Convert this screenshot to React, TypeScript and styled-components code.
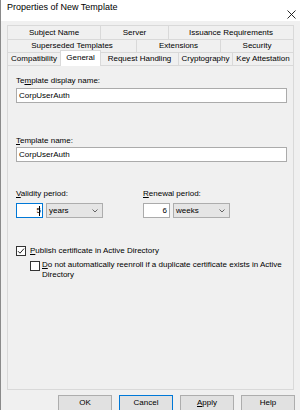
import React from "react";
import styled, { createGlobalStyle } from "styled-components";

const Global = createGlobalStyle`
  html, body { margin: 0; padding: 0; background: #f0f0f0; }
  * { box-sizing: border-box; }
`;

const Window = styled.div`
  width: 300px;
  height: 410px;
  overflow: hidden;
  background: #f0f0f0;
  border-left: 1px solid #8a8a8a;
  font-family: "Liberation Sans", Arial, sans-serif;
  font-size: 8px;
  color: #000;
  display: flex;
  flex-direction: column;
`;

const TitleBar = styled.div`
  height: 21px;
  flex: none;
  background: #ffffff;
  display: flex;
  justify-content: space-between;
  align-items: flex-start;
  padding: 1px 4px 0 6px;
`;

const Title = styled.div`
  font-size: 9px;
  line-height: 12px;
`;

const Close = styled.svg`
  margin-top: 9px;
  width: 9px;
  height: 9px;
`;

const Body = styled.div`
  display: flex;
  flex-direction: column;
  padding: 4px 0 0 6px;
`;

const TabRow = styled.div<{ $h: number }>`
  display: flex;
  height: ${(p) => p.$h}px;
`;

const Tab = styled.div<{ $w: number; $last?: boolean; $active?: boolean }>`
  width: ${(p) => p.$w + (p.$last || p.$active ? 1 : 0)}px;
  flex: none;
  display: flex;
  align-items: center;
  justify-content: center;
  white-space: nowrap;
  line-height: 10px;
  border-top: 1px solid #d9d9d9;
  border-left: 1px solid #d9d9d9;
  border-right: ${(p) => (p.$last || p.$active ? "1px solid #d9d9d9" : "none")};
  background: ${(p) => (p.$active ? "#ffffff" : "#f0f0f0")};
  position: relative;
  z-index: ${(p) => (p.$active ? 2 : 1)};
  margin-top: ${(p) => (p.$active ? -2 : 0)}px;
  height: ${(p) => (p.$active ? "calc(100% + 3px)" : "100%")};
  margin-right: ${(p) => (p.$active ? -1 : 0)}px;
  padding-bottom: ${(p) => (p.$active ? 1 : 0)}px;
`;

const Panel = styled.div`
  width: 287px;
  height: 325px;
  flex: none;
  border: 1px solid #d9d9d9;
  background: #f0f0f0;
  padding: 10px 6px 0 8px;
  display: flex;
  flex-direction: column;
  position: relative;
  z-index: 1;
`;

const Label = styled.div<{ $mt?: number }>`
  line-height: 10px;
  height: 10px;
  white-space: nowrap;
  margin-top: ${(p) => p.$mt ?? 0}px;
`;

const TextBox = styled.div<{ $mt?: number }>`
  height: 15px;
  margin-top: ${(p) => p.$mt ?? 0}px;
  background: #ffffff;
  border: 1px solid #ababab;
  display: flex;
  align-items: center;
  padding-left: 2px;
  line-height: 10px;
`;

const PeriodGrid = styled.div`
  display: grid;
  grid-template-columns: 127px 1fr;
  margin-top: 27px;
`;

const PeriodCol = styled.div`
  display: flex;
  flex-direction: column;
`;

const Controls = styled.div`
  display: flex;
  gap: 3px;
  margin-top: 4px;
`;

const Spin = styled.div<{ $focus?: boolean }>`
  width: 27px;
  height: 15px;
  background: #ffffff;
  border: 1px solid ${(p) => (p.$focus ? "#0078d7" : "#ababab")};
  display: flex;
  align-items: center;
  justify-content: flex-end;
  padding-right: 2px;
  line-height: 10px;
`;

const Caret = styled.span`
  display: inline-block;
  width: 1px;
  height: 10px;
  background: #000;
  margin-left: -2px;
`;

const Combo = styled.div`
  width: 57px;
  height: 15px;
  background: #e5e5e5;
  border: 1px solid #adadad;
  display: flex;
  align-items: center;
  justify-content: space-between;
  padding: 0 4px 0 2px;
  line-height: 10px;
`;

const Checks = styled.div`
  display: flex;
  flex-direction: column;
  margin-top: 28px;
`;

const CheckRow = styled.div<{ $indent?: number; $mt?: number }>`
  display: flex;
  align-items: flex-start;
  gap: ${(p) => (p.$indent ? 2 : 4)}px;
  margin-left: ${(p) => p.$indent ?? 0}px;
  margin-top: ${(p) => p.$mt ?? 0}px;
  line-height: 10px;
`;

const Box = styled.div<{ $mt?: number }>`
  width: 10px;
  height: 10px;
  flex: none;
  margin-top: ${(p) => p.$mt ?? 0}px;
  background: #ffffff;
  border: 1px solid #333333;
  display: flex;
  align-items: center;
  justify-content: center;
`;

const CheckText = styled.div`
  flex: 1;
`;

const Buttons = styled.div`
  display: flex;
  justify-content: flex-end;
  gap: 7px;
  margin-top: 5px;
  padding-right: 5px;
`;

const Button = styled.div<{ $default?: boolean }>`
  width: 54px;
  height: 16px;
  background: #e1e1e1;
  border: 1px solid ${(p) => (p.$default ? "#0078d7" : "#adadad")};
  display: flex;
  align-items: center;
  justify-content: center;
  line-height: 10px;
`;

type TabDef = { label: string; w: number; active?: boolean };

const rows: { h: number; tabs: TabDef[] }[] = [
  {
    h: 14,
    tabs: [
      { label: "Subject Name", w: 93 },
      { label: "Server", w: 68 },
      { label: "Issuance Requirements", w: 125 },
    ],
  },
  {
    h: 13,
    tabs: [
      { label: "Superseded Templates", w: 129 },
      { label: "Extensions", w: 84 },
      { label: "Security", w: 73 },
    ],
  },
  {
    h: 13,
    tabs: [
      { label: "Compatibility", w: 53 },
      { label: "General", w: 40, active: true },
      { label: "Request Handling", w: 78 },
      { label: "Cryptography", w: 54 },
      { label: "Key Attestation", w: 61 },
    ],
  },
];

const Chevron = () => (
  <svg width="6" height="4" viewBox="0 0 6 4">
    <path d="M0.5 0.5 L3 3 L5.5 0.5" fill="none" stroke="#555" strokeWidth="0.9" />
  </svg>
);

export default function App() {
  return (
    <>
      <Global />
      <Window>
        <TitleBar>
          <Title>Properties of New Template</Title>
          <Close viewBox="0 0 9 9">
            <path d="M0.5 0.5 L8.5 8.5 M8.5 0.5 L0.5 8.5" stroke="#111" strokeWidth="0.9" />
          </Close>
        </TitleBar>
        <Body>
          {rows.map((r, i) => (
            <TabRow key={i} $h={r.h}>
              {r.tabs.map((t, j) => (
                <Tab key={t.label} $w={t.w} $active={t.active} $last={j === r.tabs.length - 1}>
                  {t.label}
                </Tab>
              ))}
            </TabRow>
          ))}
          <Panel>
            <Label>
              Te<u>m</u>plate display name:
            </Label>
            <TextBox $mt={2}>CorpUserAuth</TextBox>
            <Label $mt={33}>
              <u>T</u>emplate name:
            </Label>
            <TextBox $mt={1}>CorpUserAuth</TextBox>
            <PeriodGrid>
              <PeriodCol>
                <Label>
                  <u>V</u>alidity period:
                </Label>
                <Controls>
                  <Spin $focus>
                    5<Caret />
                  </Spin>
                  <Combo>
                    years
                    <Chevron />
                  </Combo>
                </Controls>
              </PeriodCol>
              <PeriodCol>
                <Label>
                  <u>R</u>enewal period:
                </Label>
                <Controls>
                  <Spin>6</Spin>
                  <Combo>
                    weeks
                    <Chevron />
                  </Combo>
                </Controls>
              </PeriodCol>
            </PeriodGrid>
            <Checks>
              <CheckRow>
                <Box>
                  <svg width="8" height="8" viewBox="0 0 8 8">
                    <path d="M1 4.2 L3 6.2 L7 1.6" fill="none" stroke="#222" strokeWidth="1" />
                  </svg>
                </Box>
                <CheckText>
                  <u>P</u>ublish certificate in Active Directory
                </CheckText>
              </CheckRow>
              <CheckRow $indent={14} $mt={4}>
                <Box $mt={1} />
                <CheckText>
                  <u>D</u>o not automatically reenroll if a duplicate certificate exists in Active Directory
                </CheckText>
              </CheckRow>
            </Checks>
          </Panel>
          <Buttons>
            <Button>OK</Button>
            <Button $default>Cancel</Button>
            <Button>
              <u>A</u>pply
            </Button>
            <Button>Help</Button>
          </Buttons>
        </Body>
      </Window>
    </>
  );
}
